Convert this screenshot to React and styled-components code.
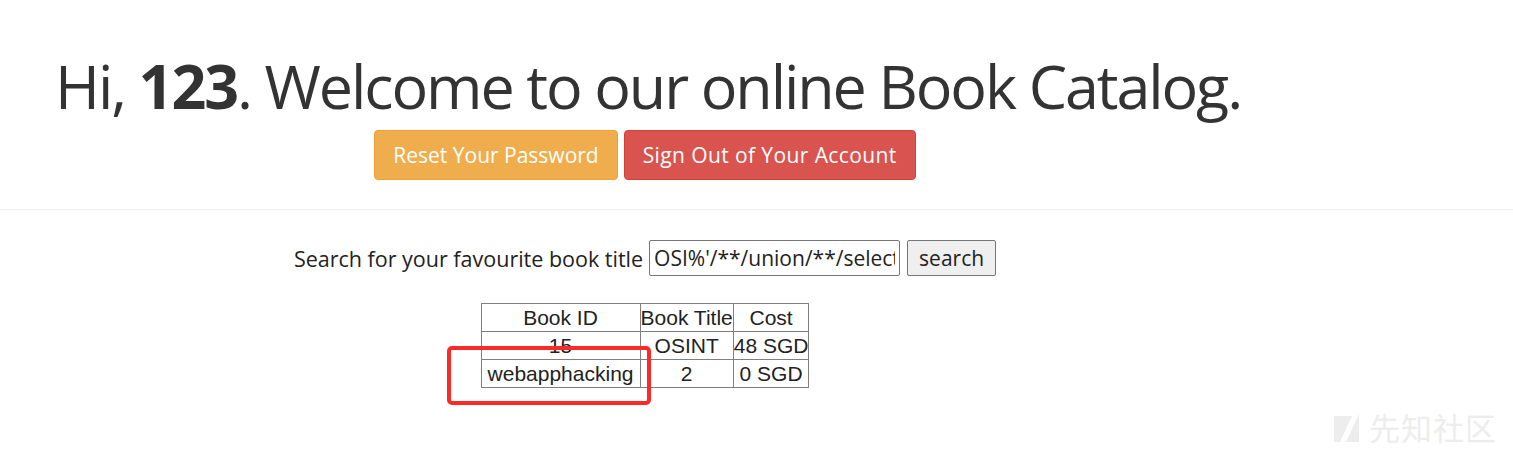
import styled, { createGlobalStyle } from "styled-components";

const GlobalStyle = createGlobalStyle`
  html, body {
    margin: 0;
    padding: 0;
    background: #ffffff;
  }
  body {
    font-family: "Open Sans", "Noto Sans", sans-serif;
    color: #333333;
  }
`;

const Page = styled.div`
  width: 1513px;
  height: 456px;
  position: relative;
  overflow: hidden;
`;

const Header = styled.div`
  width: 100%;
  padding-top: 46px;
  padding-bottom: 29px;
  border-bottom: 1px solid #eeeeee;
`;

const Title = styled.h1`
  margin: 0 0 0 55px;
  font-size: 61px;
  font-weight: 400;
  line-height: 80px;
  letter-spacing: -2.1px;
  color: #333333;
  white-space: nowrap;

  b {
    font-weight: 700;
  }
`;

const ButtonRow = styled.div`
  width: 1290px;
  display: flex;
  justify-content: center;
  gap: 6px;
  margin-top: 4px;
`;

const ActionButton = styled.a`
  display: flex;
  align-items: center;
  justify-content: center;
  height: 50px;
  box-sizing: border-box;
  padding: 0 18px;
  border-radius: 4px;
  border: 1px solid ${(p) => (p.$danger ? "#d43f3a" : "#eea236")};
  background: ${(p) => (p.$danger ? "#d9534f" : "#f0ad4e")};
  color: #ffffff;
  font-size: 21px;
  letter-spacing: ${(p) => (p.$danger ? "0.4px" : "0")};
  text-decoration: none;
  cursor: pointer;
`;

const Content = styled.div`
  width: 1290px;
  display: flex;
  flex-direction: column;
  align-items: center;
  padding-top: 30px;
`;

const SearchForm = styled.form`
  display: flex;
  align-items: center;
  gap: 6px;
  font-size: 21.5px;
  color: #222222;
`;

const SearchInput = styled.input`
  width: 251px;
  height: 36px;
  box-sizing: border-box;
  border: 1px solid #767676;
  border-radius: 2px;
  padding: 0 4px;
  font-family: "Open Sans", "Noto Sans", sans-serif;
  font-size: 21px;
  color: #222222;
`;

const SearchButton = styled.button`
  height: 36px;
  box-sizing: border-box;
  padding: 0 11px;
  border: 1px solid #767676;
  border-radius: 2px;
  background: #efefef;
  font-family: "Open Sans", "Noto Sans", sans-serif;
  font-size: 21px;
  color: #222222;
  margin-left: 1px;
`;

const TableWrap = styled.div`
  position: relative;
  margin-top: 27px;
`;

const Table = styled.table`
  border-collapse: collapse;
  font-family: "Liberation Sans", Arial, sans-serif;
  font-size: 21px;
  color: #222222;

  th,
  td {
    border: 1px solid #808080;
    padding: 0;
    height: 27px;
    line-height: 26px;
    text-align: center;
    font-weight: 400;
    white-space: nowrap;
  }
`;

const Highlight = styled.div`
  position: absolute;
  left: -34px;
  top: 43px;
  width: 204px;
  height: 59px;
  box-sizing: border-box;
  border: 4px solid #fb2a26;
  border-radius: 5px;
  pointer-events: none;
`;

const Watermark = styled.div`
  position: absolute;
  right: 16px;
  bottom: 7px;
  display: flex;
  align-items: center;
  gap: 9px;
  color: #ededed;
  font-family: "Noto Sans CJK SC", sans-serif;
  font-size: 31px;
  letter-spacing: 1px;
`;

const rows = [
  ["15", "OSINT", "48 SGD"],
  ["webapphacking", "2", "0 SGD"],
];

export default function App() {
  return (
    <Page>
      <GlobalStyle />
      <Header>
        <Title>
          Hi, <b>123</b>. Welcome to our online Book Catalog.
        </Title>
        <ButtonRow>
          <ActionButton>Reset Your Password</ActionButton>
          <ActionButton $danger>Sign Out of Your Account</ActionButton>
        </ButtonRow>
      </Header>
      <Content>
        <SearchForm onSubmit={(e) => e.preventDefault()}>
          <span>Search for your favourite book title</span>
          <SearchInput defaultValue="OSI%'/**/union/**/select" />
          <SearchButton type="submit">search</SearchButton>
        </SearchForm>
        <TableWrap>
          <Table>
            <thead>
              <tr>
                <th style={{ width: 158 }}>Book ID</th>
                <th>Book Title</th>
                <th>Cost</th>
              </tr>
            </thead>
            <tbody>
              {rows.map((r) => (
                <tr key={r[0]}>
                  {r.map((c, i) => (
                    <td key={i}>{c}</td>
                  ))}
                </tr>
              ))}
            </tbody>
          </Table>
          <Highlight />
        </TableWrap>
      </Content>
      <Watermark>
        <svg width="26" height="30" viewBox="0 0 26 30">
          <polygon points="0,30 0,4 18,4 6,30" fill="#ededed" />
          <polygon points="12,30 25,2 25,30" fill="#ededed" />
        </svg>
        <span>先知社区</span>
      </Watermark>
    </Page>
  );
}
